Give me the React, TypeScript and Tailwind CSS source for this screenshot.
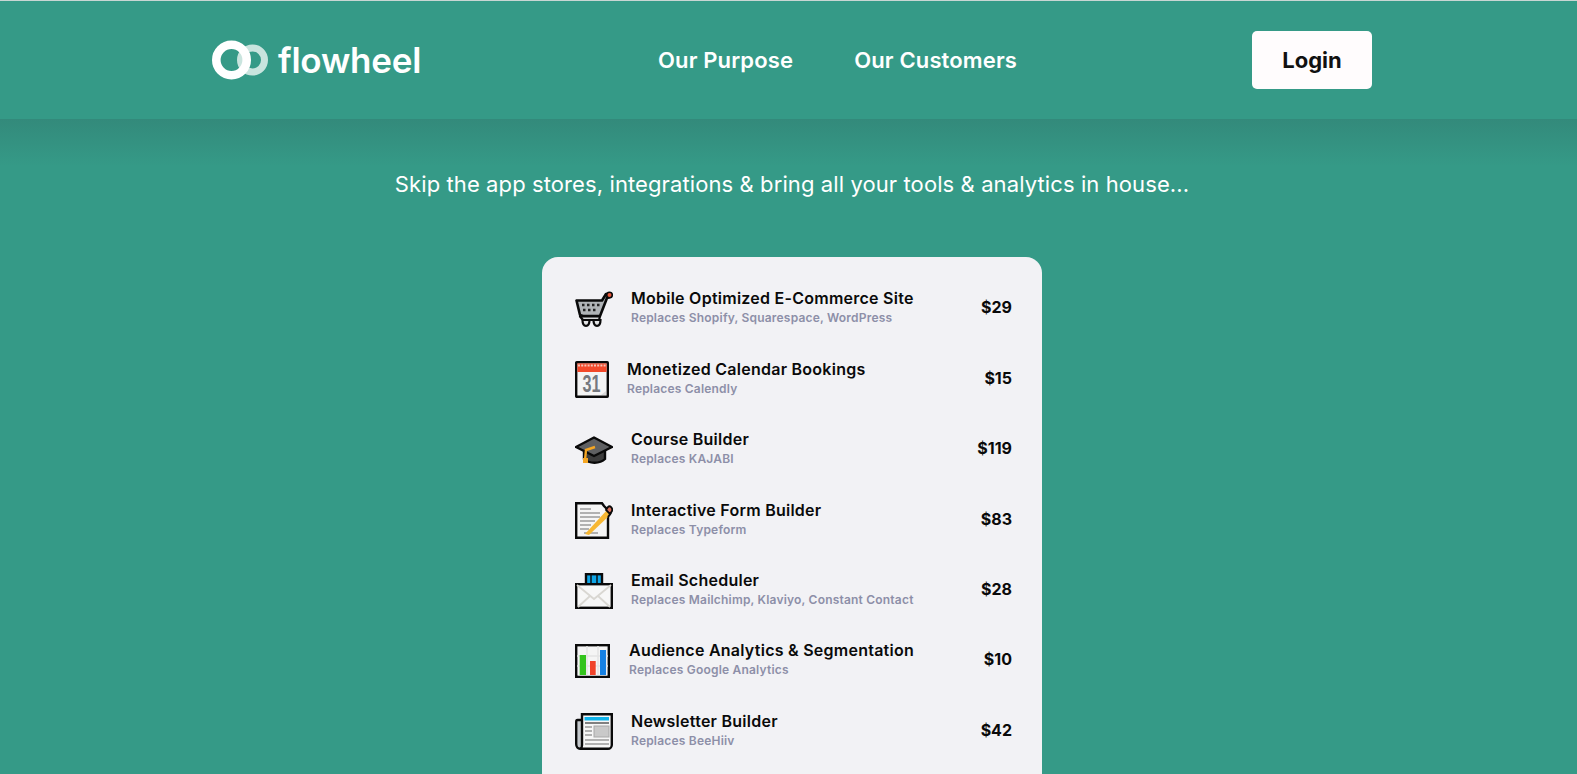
import React from "react";

const Outline = "#0a0a0a";

const Cart = () => (
  <svg width="38" height="36" viewBox="0 0 38 36" fill="none">
    <path d="M1.5 9.5 H27 L31 3 L35.5 2.5 L35 6 L32 7 L25 25 L8 25 L5 24 Z" fill="#b0b4b7" stroke={Outline} strokeWidth="2.6" strokeLinejoin="round" />
    <circle cx="34.5" cy="4" r="2.8" fill="#e8593c" stroke={Outline} strokeWidth="1.6" />
    <path d="M5 25.5 H25 L24 29 H8 Z" fill="#d5d7d8" stroke={Outline} strokeWidth="2.2" strokeLinejoin="round" />
    <path d="M7.5 29 C7.5 33 9 34.8 11 34.8 C14 34.8 14.5 31 14.5 29 Z M18.5 29 C18.5 33 20 34.8 22 34.8 C25 34.8 25.5 31 25.5 29 Z" fill="#e2e3e4" stroke={Outline} strokeWidth="2.2" />
    <path d="M7 14h2.5M12 14h2.5M17 14h2.5M22 14h2.5M8 19h2.5M13 19h2.5M18 19h2.5" stroke="#222" strokeWidth="2.4" />
  </svg>
);

const Calendar = () => (
  <svg width="34" height="37" viewBox="0 0 34 37" fill="none">
    <rect x="1.2" y="1.2" width="31.6" height="34.6" rx="0.5" fill="#f4f4f4" stroke={Outline} strokeWidth="2.4" />
    <rect x="2.4" y="2.4" width="29.2" height="8.6" fill="#f3492a" />
    <path d="M3 4.4h28" stroke="#f6c5b8" strokeWidth="2" strokeDasharray="2 1.2" />
    <text x="16.5" y="31" textAnchor="middle" textLength="18" lengthAdjust="spacingAndGlyphs" fontFamily="'Liberation Sans', sans-serif" fontSize="23" fontWeight="700" fill="#76797f">31</text>
    <path d="M26 34 L31 34 L31 30 Z" fill="#d9d9d9" />
  </svg>
);

const Cap = () => (
  <svg width="38" height="28" viewBox="0 0 38 28" fill="none">
    <path d="M9 13 L9 23 C14 28 25 28 30 23 L30 13 Z" fill="#3d3d3d" stroke={Outline} strokeWidth="2.4" />
    <path d="M19 1.5 L37 11 L19 20 L1 11 Z" fill="#5f6062" stroke={Outline} strokeWidth="2.4" strokeLinejoin="round" />
    <path d="M20 11 L11 14 L10 24" stroke="#f5a623" strokeWidth="2.4" />
    <path d="M8 22h5v5H8z" fill="#f5a623" />
  </svg>
);

const Form = () => (
  <svg width="38" height="37" viewBox="0 0 38 37" fill="none">
    <path d="M1.2 1.2 H27 L29 4 L33 8 V35.8 H1.2 Z" fill="#f5f5f5" stroke={Outline} strokeWidth="2.4" />
    <path d="M5 7h11M5 11h20M5 15h20M5 19h15M5 23h11M5 27h9M9 31h14" stroke="#9b9b9b" strokeWidth="1.4" />
    <path d="M10 32 L32 8 L36 12 L14 33 Z" fill="#f7b733" />
    <path d="M31 8 L33 5 C35 3 38 6 37 9 L35 12 Z" fill="#d9705a" stroke={Outline} strokeWidth="1.8" />
    <path d="M33 15 L36 11" stroke={Outline} strokeWidth="2" />
  </svg>
);

const Mail = () => (
  <svg width="38" height="36" viewBox="0 0 38 36" fill="none">
    <rect x="11" y="1.2" width="16" height="11" fill="#0ea5e6" stroke={Outline} strokeWidth="2.4" />
    <path d="M16 2v9M22 2v9" stroke={Outline} strokeWidth="1.4" />
    <rect x="1.2" y="11.2" width="35.6" height="23.6" fill="#f7f7f7" stroke={Outline} strokeWidth="2.4" />
    <path d="M2 12 L19 26 L36 12 M3 34 L15 23 M35 34 L23 23" stroke="#d9d7d2" strokeWidth="1.8" />
  </svg>
);

const Chart = () => (
  <svg width="35" height="34" viewBox="0 0 35 34" fill="none">
    <rect x="1.2" y="1.2" width="32.6" height="31.6" fill="#f5f5f5" stroke={Outline} strokeWidth="2.4" />
    <path d="M12 2v30M23 2v30M2 12h31M2 22h31" stroke="#e4e4e4" strokeWidth="1.5" />
    <rect x="4.7" y="11" width="6.3" height="20" fill="#33c41c" />
    <rect x="15" y="17" width="5.7" height="14" fill="#f0432a" />
    <rect x="25" y="6" width="6" height="25" fill="#1681e4" />
    <path d="M3 31.5h29" stroke="#bcbcbc" strokeWidth="1" />
  </svg>
);

const News = () => (
  <svg width="38" height="37" viewBox="0 0 38 37" fill="none">
    <path d="M8 7 H2.5 C1.5 7 1.2 8 1.2 9 V31 C1.2 34 3 35.8 5 35.8 H10 Z" fill="#c4c8cc" stroke={Outline} strokeWidth="2.4" />
    <path d="M7 1.2 H36.8 V32 C36.8 34 35 35.8 33 35.8 H5 C6.5 35.8 7 33 7 32 Z" fill="#f6f6f6" stroke={Outline} strokeWidth="2.4" />
    <rect x="9.5" y="4" width="24.5" height="3.5" fill="#10b3ea" />
    <path d="M10 10h24" stroke="#333" strokeWidth="1.2" />
    <rect x="19" y="13" width="15" height="11" fill="#c9c9c9" stroke="#a8a8a8" />
    <path d="M10 14h7M10 18h7M10 22h7M10 27h24M10 31h24" stroke="#9a9a9a" strokeWidth="1.4" />
  </svg>
);

const rows = [
  { icon: <Cart />, w: "w-[38px]", gap: "ml-[18px]", title: "Mobile Optimized E-Commerce Site", sub: "Replaces Shopify, Squarespace, WordPress", price: "$29" },
  { icon: <Calendar />, w: "w-[34px]", gap: "ml-[18px]", title: "Monetized Calendar Bookings", sub: "Replaces Calendly", price: "$15" },
  { icon: <Cap />, w: "w-[38px]", gap: "ml-[18px]", title: "Course Builder", sub: "Replaces KAJABI", price: "$119" },
  { icon: <Form />, w: "w-[38px]", gap: "ml-[18px]", title: "Interactive Form Builder", sub: "Replaces Typeform", price: "$83" },
  { icon: <Mail />, w: "w-[38px]", gap: "ml-[18px]", title: "Email Scheduler", sub: "Replaces Mailchimp, Klaviyo, Constant Contact", price: "$28" },
  { icon: <Chart />, w: "w-[35px]", gap: "ml-[19px]", title: "Audience Analytics & Segmentation", sub: "Replaces Google Analytics", price: "$10" },
  { icon: <News />, w: "w-[38px]", gap: "ml-[18px]", title: "Newsletter Builder", sub: "Replaces BeeHiiv", price: "$42" },
];

export default function App() {
  return (
    <div className="h-[774px] overflow-hidden bg-[#359a87] font-['Inter',sans-serif] text-white">
      <header className="h-[119px] border-t border-[#c9d6d3] bg-[#359a87] pl-[212px] pr-[205px] flex items-center relative z-10">
        <div className="flex items-center w-[446px]">
          <svg width="56" height="40" viewBox="0 0 56 40" fill="none">
            <circle cx="40.5" cy="20" r="12" stroke="#c9e4de" strokeWidth="7" />
            <circle cx="19.5" cy="20" r="15.2" stroke="#ffffff" strokeWidth="8.6" />
          </svg>
          <span className="ml-[10px] text-[35px] leading-none font-semibold tracking-[-0.2px]">flowheel</span>
        </div>
        <nav className="mt-[1px] flex items-center gap-[61px] text-[22px] font-semibold tracking-[0.15px]">
          <span>Our Purpose</span>
          <span>Our Customers</span>
        </nav>
        <button className="ml-auto h-[58px] w-[120px] rounded-[5px] bg-[#fffcfd] text-[22px] font-bold text-[#111111]">Login</button>
      </header>
      <div className="h-[47px] bg-gradient-to-b from-[#338a7b] to-[#359a87]" />
      <main className="pl-[7px] flex flex-col items-center">
        <p className="text-[22px] leading-[36px] tracking-[0.1px]">Skip the app stores, integrations &amp; bring all your tools &amp; analytics in house...</p>
        <div className="mt-[55px] w-[500px] rounded-t-[16px] bg-[#f2f2f5] pl-[33px] pr-[30px] pt-[15.3px] pb-[40px] text-[#0a0a0a]">
          {rows.map((r) => (
            <div key={r.title} className="flex h-[70.4px] items-center">
              <div className={`${r.w} flex shrink-0 justify-center pt-[4px]`}>{r.icon}</div>
              <div className={`${r.gap} min-w-0 flex-1`}>
                <div className="text-[16px] leading-[21px] font-semibold tracking-[0.25px] whitespace-nowrap">{r.title}</div>
                <div className="mt-[1px] text-[12px] leading-[16px] font-semibold tracking-[0.2px] text-[#8d8fa8] whitespace-nowrap">{r.sub}</div>
              </div>
              <div className="text-[16px] font-bold">{r.price}</div>
            </div>
          ))}
        </div>
      </main>
    </div>
  );
}
